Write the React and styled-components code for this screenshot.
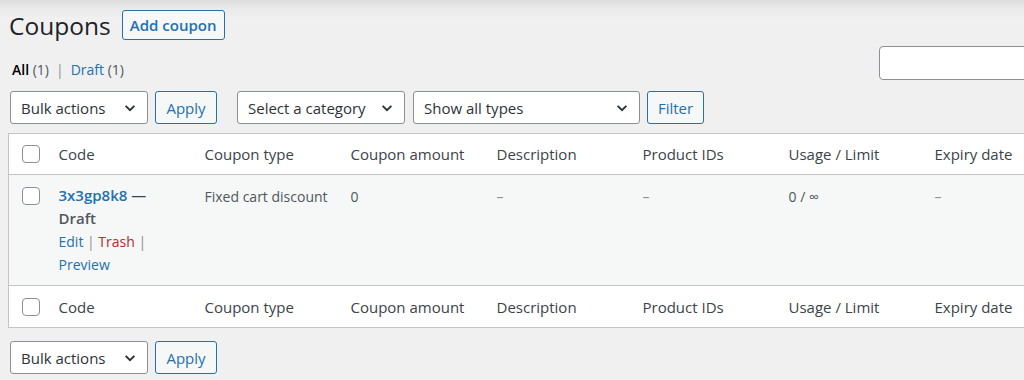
import React from "react";
import styled, { createGlobalStyle } from "styled-components";

const GlobalStyle = createGlobalStyle`
  html, body { margin: 0; padding: 0; background: #f0f0f1; }
  body { font-family: "Open Sans", "Noto Sans", sans-serif; color: #3c434a; }
  * { box-sizing: border-box; }
`;

const Page = styled.div`
  width: 1024px;
  height: 380px;
  overflow: hidden;
  background: linear-gradient(#dcdcde 0px, #e9e9ea 8px, #f0f0f1 18px);
`;

const Inner = styled.div`
  width: 1300px;
  padding-left: 8px;
`;

const TitleRow = styled.div`
  display: flex;
  align-items: center;
  gap: 11px;
  height: 40px;
  padding-top: 10px;
`;

const Title = styled.h1`
  margin: 0 0 0 1px;
  font-size: 24.5px;
  font-weight: 400;
  line-height: 30px;
  position: relative;
  top: 1px;
  color: #1d2327;
`;

const OutlineButton = styled.button`
  font-family: inherit;
  height: ${(p) => p.$h || 33}px;
  padding: 0 ${(p) => p.$px || 10}px;
  font-size: ${(p) => p.$fs || 15}px;
  font-weight: ${(p) => p.$fw || 400};
  color: #2271b1;
  background: #f6f7f7;
  border: 1px solid #2271b1;
  border-radius: 3px;
  margin-left: ${(p) => p.$ml || 0}px;
  display: inline-flex;
  align-items: center;
  justify-content: center;
  white-space: nowrap;
  width: ${(p) => (p.$w ? `${p.$w}px` : "auto")};
  flex: none;
`;

const SubRow = styled.div`
  display: flex;
  align-items: flex-start;
  height: 42px;
`;

const SubSub = styled.ul`
  list-style: none;
  margin: 18px 0 0 0;
  padding: 0 0 0 4px;
  width: 871px;
  flex: none;
  font-size: 14px;
  line-height: 24px;
  display: flex;
  gap: 4px;
  color: #646970;
`;

const SubItem = styled.li`
  color: ${(p) => (p.$current ? "#000" : "#2271b1")};
  font-weight: ${(p) => (p.$current ? 600 : 400)};
`;

const Count = styled.span`
  color: #50575e;
  font-weight: 400;
`;

const Sep = styled.span`
  color: #8c8f94;
  margin: 0 3px;
`;

const SearchInput = styled.input`
  margin-top: 6px;
  width: 240px;
  height: 34px;
  border: 1px solid #8c8f94;
  border-radius: 4px;
  background: #fff;
  flex: none;
`;

const Toolbar = styled.div`
  display: flex;
  align-items: center;
  margin-top: ${(p) => p.$mt}px;
  padding-left: 2px;
  height: 33px;
`;

const SelectBox = styled.div`
  width: ${(p) => p.$w}px;
  height: 33px;
  margin-left: ${(p) => p.$ml || 0}px;
  flex: none;
  display: flex;
  align-items: center;
  justify-content: space-between;
  padding: 0 10px 0 10px;
  background: #fff;
  border: 1px solid #8c8f94;
  border-radius: 3px;
  font-size: 15px;
  color: #2c3338;
`;

const Chevron = () => (
  <svg width="14" height="14" viewBox="0 0 16 16" aria-hidden="true">
    <path d="M3 5.5 L8 10.5 L13 5.5" fill="none" stroke="#2c3338" strokeWidth="2.2" />
  </svg>
);

const Table = styled.table`
  margin-top: 9px;
  border-collapse: collapse;
  border: 1px solid #c3c4c7;
  background: #fff;
  table-layout: fixed;
  width: 1063px;
`;

const CheckCol = styled.col`
  width: 40px;
`;
const DataCol = styled.col`
  width: 146px;
`;

const HeadCell = styled.th`
  height: ${(p) => (p.$foot ? 42 : 41)}px;
  padding: 0 10px;
  text-align: left;
  font-weight: 400;
  font-size: 15px;
  color: #3c434a;
  vertical-align: middle;
  border-${(p) => (p.$foot ? "top" : "bottom")}: 1px solid #c3c4c7;
  white-space: nowrap;
`;

const CheckHead = styled.th`
  padding: 0 0 0 13px;
  vertical-align: middle;
  border-${(p) => (p.$foot ? "top" : "bottom")}: 1px solid #c3c4c7;
`;

const Box = styled.span`
  display: block;
  width: 18px;
  height: 18px;
  border: 1px solid #8c8f94;
  border-radius: 4px;
  background: #fff;
`;

const BodyRow = styled.tr`
  background: #f6f7f7;
  height: 111px;
`;

const CheckCell = styled.td`
  vertical-align: top;
  padding: 12px 0 0 13px;
`;

const Cell = styled.td`
  vertical-align: top;
  padding: 10px 10px 0;
  font-size: 14px;
  line-height: 23px;
  color: ${(p) => (p.$muted ? "#8c8f94" : "#50575e")};
`;

const CodeCell = styled.td`
  vertical-align: top;
  padding: 9px 10px 0;
  font-size: 14px;
  line-height: 23px;
  color: #3c434a;
`;

const CodeLine = styled.div`
  font-weight: 600;
  font-size: 15px;
  color: ${(p) => (p.$state ? "#50575e" : "#3c434a")};
`;

const CodeLink = styled.a`
  color: #2271b1;
  text-decoration: none;
`;

const ActionLine = styled.div`
  color: #8c8f94;
  font-size: 14px;
`;

const Action = styled.a`
  color: ${(p) => (p.$danger ? "#b32d2e" : "#2271b1")};
  text-decoration: none;
`;

const columns = [
  "Code",
  "Coupon type",
  "Coupon amount",
  "Description",
  "Product IDs",
  "Usage / Limit",
  "Expiry date",
];

const HeaderRow = ({ foot }) => (
  <tr>
    <CheckHead $foot={foot}>
      <Box />
    </CheckHead>
    {columns.map((c) => (
      <HeadCell key={c} $foot={foot}>
        {c}
      </HeadCell>
    ))}
  </tr>
);

const BottomBar = styled(Toolbar)``;

export default function App() {
  return (
    <>
      <GlobalStyle />
      <Page>
        <Inner>
          <TitleRow>
            <Title>Coupons</Title>
            <OutlineButton $h={30} $px={9} $fs={15} $fw={600} $w={103}>
              Add coupon
            </OutlineButton>
          </TitleRow>
          <SubRow>
            <SubSub>
              <SubItem $current>
                All <Count>(1)</Count>
              </SubItem>
              <Sep>|</Sep>
              <SubItem>
                Draft <Count>(1)</Count>
              </SubItem>
            </SubSub>
            <SearchInput aria-label="Search coupons" />
          </SubRow>
          <Toolbar $mt={9}>
            <SelectBox $w={138}>
              <span>Bulk actions</span>
              <Chevron />
            </SelectBox>
            <OutlineButton $ml={7} $w={62}>Apply</OutlineButton>
            <SelectBox $w={168} $ml={20}>
              <span>Select a category</span>
              <Chevron />
            </SelectBox>
            <SelectBox $w={227} $ml={8}>
              <span>Show all types</span>
              <Chevron />
            </SelectBox>
            <OutlineButton $ml={7} $w={57}>Filter</OutlineButton>
          </Toolbar>
          <Table>
            <colgroup>
              <CheckCol />
              {columns.map((c) => (
                <DataCol key={c} />
              ))}
            </colgroup>
            <thead>
              <HeaderRow />
            </thead>
            <tbody>
              <BodyRow>
                <CheckCell>
                  <Box />
                </CheckCell>
                <CodeCell>
                  <CodeLine>
                    <CodeLink href="#">3x3gp8k8</CodeLink> —
                  </CodeLine>
                  <CodeLine $state>Draft</CodeLine>
                  <ActionLine>
                    <Action href="#">Edit</Action> | <Action href="#" $danger>Trash</Action> |
                  </ActionLine>
                  <ActionLine>
                    <Action href="#">Preview</Action>
                  </ActionLine>
                </CodeCell>
                <Cell>Fixed cart discount</Cell>
                <Cell>0</Cell>
                <Cell $muted>–</Cell>
                <Cell $muted>–</Cell>
                <Cell>0 / ∞</Cell>
                <Cell $muted>–</Cell>
              </BodyRow>
            </tbody>
            <tfoot>
              <HeaderRow foot />
            </tfoot>
          </Table>
          <BottomBar $mt={13}>
            <SelectBox $w={138}>
              <span>Bulk actions</span>
              <Chevron />
            </SelectBox>
            <OutlineButton $ml={7} $w={62}>Apply</OutlineButton>
          </BottomBar>
        </Inner>
      </Page>
    </>
  );
}
